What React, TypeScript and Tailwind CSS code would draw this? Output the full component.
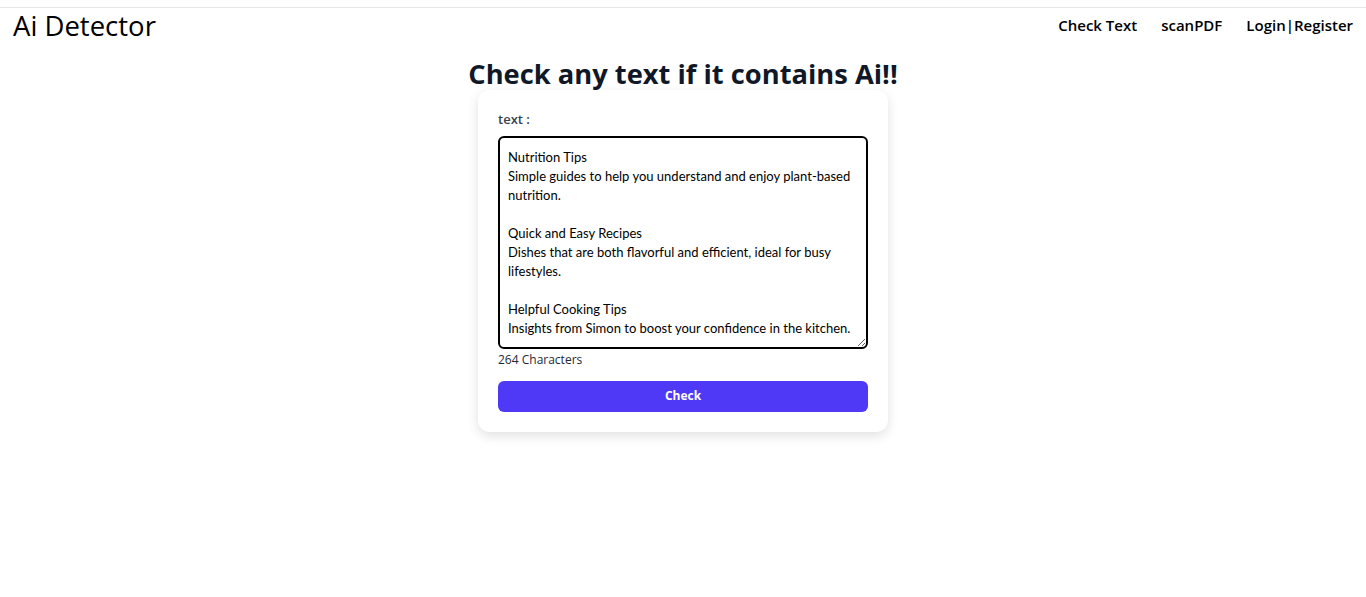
import { useState } from 'react';

const SAMPLE = `Nutrition Tips
Simple guides to help you understand and enjoy plant-based nutrition.

Quick and Easy Recipes
Dishes that are both flavorful and efficient, ideal for busy lifestyles.

Helpful Cooking Tips
Insights from Simon to boost your confidence in the kitchen.`;

export default function App() {
  const [text, setText] = useState(SAMPLE);

  return (
    <div className="min-h-screen bg-white font-['Open_Sans',sans-serif] text-black">
      <div className="h-[7px]" />
      <header className="flex items-center justify-between border-t border-gray-200 pl-[13px] pr-[13px]">
        <span className="text-[27.5px] leading-[36px]">Ai Detector</span>
        <nav className="-mt-[2px] flex items-center gap-[24px] text-[15px] font-semibold">
          <a href="#">Check Text</a>
          <a href="#">scanPDF</a>
          <a href="#">Login|Register</a>
        </nav>
      </header>

      <main className="flex flex-col items-center">
        <h1 className="mt-[12px] text-[27.3px] font-bold leading-[36px] text-gray-900">Check any text if it contains Ai!!</h1>
        <div className="-mt-[2px] w-[410px] rounded-xl bg-white p-5 shadow-[0_4px_12px_rgba(0,0,0,0.12)]">
          <label className="block text-[13px] font-semibold text-gray-700">text :</label>
          <textarea
            value={text}
            onChange={(e) => setText(e.target.value)}
            className="mt-[6px] block h-[213px] w-full rounded-md border-2 border-black px-2 py-2.5 font-['Lato',sans-serif] text-[13px] leading-[19px] outline-none"
          />
          <p className="mt-[2px] text-[12px] text-gray-800">{text.length} Characters</p>
          <button
            type="button"
            className="mt-[12px] h-[31px] w-full rounded-md bg-indigo-600 text-[12px] font-bold text-white"
          >
            Check
          </button>
        </div>
      </main>
    </div>
  );
}
